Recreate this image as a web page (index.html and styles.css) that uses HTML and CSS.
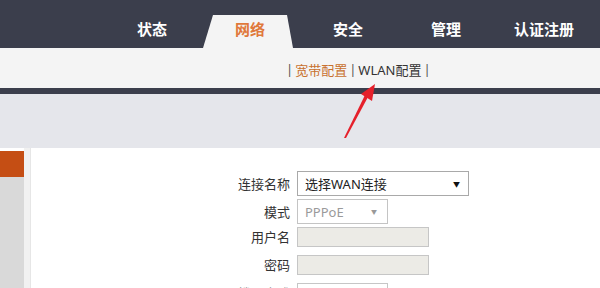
FILE: index.html
```html
<!DOCTYPE html>
<html lang="zh-CN">
<head>
<meta charset="utf-8">
<title>网络</title>
<link rel="stylesheet" href="styles.css">
</head>
<body>
<div class="page">
  <nav class="topbar">
    <a class="nav-item">状态</a>
    <a class="nav-item active">网络</a>
    <a class="nav-item">安全</a>
    <a class="nav-item">管理</a>
    <a class="nav-item">认证注册</a>
  </nav>
  <div class="subbar">
    <span class="sep">|</span><a class="sub-link current">宽带配置</a><span class="sep">|</span><a class="sub-link">WLAN配置</a><span class="sep">|</span>
  </div>
  <div class="divider"></div>
  <div class="band"></div>
  <div class="main">
    <aside class="side">
      <div class="side-active"></div>
      <div class="side-rest"></div>
    </aside>
    <div class="gutter"></div>
    <form class="content">
      <div class="row tall">
        <label class="label">连接名称</label>
        <div class="select wide"><span>选择WAN连接</span><span class="caret">▼</span></div>
      </div>
      <div class="row tall">
        <label class="label">模式</label>
        <div class="select narrow muted"><span>PPPoE</span><span class="caret">▼</span></div>
      </div>
      <div class="row short">
        <label class="label">用户名</label>
        <div class="input"></div>
      </div>
      <div class="row short">
        <label class="label">密码</label>
        <div class="input"></div>
      </div>
      <div class="row short">
        <label class="label faint">拨号方式</label>
        <div class="input small white"></div>
      </div>
    </form>
  </div>
  <svg class="arrow" width="600" height="288" viewBox="0 0 600 288" aria-hidden="true">
    <polygon points="344,138 346,138 368,97 365,95" fill="#e5202b"/>
    <polygon points="375,84 361,94 372,101" fill="#e5202b"/>
  </svg>
</div>
</body>
</html>
```
FILE: styles.css
```css
* { box-sizing: border-box; margin: 0; padding: 0; }
html, body { width: 600px; height: 288px; overflow: hidden; background: #fff; }
body { font-family: "Noto Sans", "Noto Sans CJK SC", sans-serif; color: #333; }
.page { position: relative; width: 600px; height: 288px; }

.topbar {
  height: 48px;
  background: #3b3e4c;
  display: flex;
  padding-left: 103px;
}
.nav-item {
  width: 98px;
  padding-top: 15px;
  height: 48px;
  line-height: 28px;
  text-align: center;
  font-size: 15px;
  font-weight: 700;
  color: #fff;
  font-family: "Noto Sans CJK SC", sans-serif;
}
.nav-item.active {
  background: #f4f4f4;
  color: #e0783a;
  clip-path: polygon(2px 100%, 12px 15px, 86px 15px, 92px 100%);
}

.subbar {
  height: 40px;
  background: #f4f4f4;
  padding-left: 284px;
  display: flex;
  align-items: center;
  font-size: 13px;
  font-family: "Noto Sans", "Noto Sans CJK SC", sans-serif;
  padding-top: 2px;
}
.sep { color: #555; margin: 0 2px; }
.sub-link { color: #333; }
.sub-link.current { color: #c8712f; }

.divider { height: 6px; background: #3b3e4c; }
.band { height: 54px; background: #e5e6eb; }

.main { display: flex; height: 140px; }
.side { width: 24px; display: flex; flex-direction: column; padding-top: 3px; background: #fff; }
.side-active { height: 26px; background: #c54e14; }
.side-rest { flex: 1; background: #d9d9d9; }
.gutter { width: 7px; background: #f1f1f1; border-right: 1px solid #e6e6e6; }

.content { flex: 1; padding-top: 23px; display: flex; flex-direction: column; }
.row { display: flex; flex-shrink: 0; height: 28px; align-items: flex-start; gap: 7px; font-size: 13px; }
.label { width: 259px; text-align: right; color: #333; font-family: "Noto Sans CJK SC", sans-serif; }
.row.tall .label { line-height: 25px; }
.row.short .label { line-height: 20px; }
.label.faint { color: #999; }

.select {
  height: 25px;
  border: 1px solid #a9a9a9;
  background: #fff;
  display: flex;
  align-items: center;
  justify-content: space-between;
  padding: 0 8px 0 7px;
  color: #222;
  font-family: "Noto Sans", "Noto Sans CJK SC", sans-serif;
}
.select.wide { width: 172px; }
.select.narrow { width: 91px; }
.select.muted { color: #9a9a9a; border-color: #c4c4c4; }
.caret { font-size: 7px; color: #111; }
.select.muted .caret { color: #999; font-size: 6px; margin-right: 2px; }

.input {
  width: 132px;
  height: 20px;
  border: 1px solid #c6c6c6;
  background: #ecebe6;
}
.input.small { width: 91px; height: 22px; }
.input.white { background: #fff; }

.arrow { position: absolute; left: 0; top: 0; pointer-events: none; }
```
